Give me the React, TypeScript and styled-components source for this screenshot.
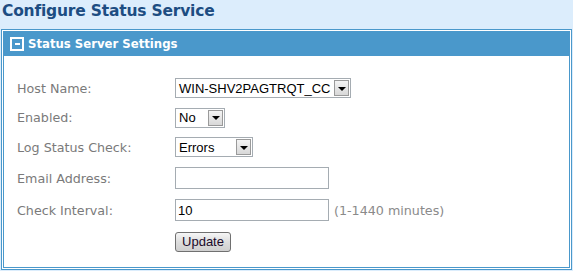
import styled, { createGlobalStyle } from "styled-components";
import { FC } from "react";

const Global = createGlobalStyle`
  html, body {
    margin: 0;
    padding: 0;
    background: #dcedfc;
  }
  body {
    font-family: "DejaVu Sans", Verdana, sans-serif;
  }
`;

const Page = styled.div`
  width: 573px;
  height: 271px;
  overflow: hidden;
  background: #dcedfc;
`;

const Title = styled.h1`
  margin: 0;
  padding: 2px 0 0 2px;
  height: 29px;
  box-sizing: border-box;
  font-family: "DejaVu Sans", Verdana, sans-serif;
  font-weight: bold;
  font-size: 15.5px;
  letter-spacing: -0.2px;
  color: #1d4d82;
`;

const Panel = styled.div`
  margin-left: 1px;
  width: 571px;
  box-sizing: border-box;
  border: 1px solid #4a98cb;
  padding: 1px;
  background: #fff;
`;

const Inner = styled.div`
  border: 1px solid #4a98cb;
  height: 237px;
  box-sizing: border-box;
`;

const Header = styled.div`
  height: 24px;
  background: #4a98cb;
  display: flex;
  align-items: center;
  padding-left: 6px;
  gap: 4px;
  color: #fff;
  font-family: "DejaVu Sans", Verdana, sans-serif;
  font-weight: bold;
  font-size: 11.7px;
`;

const Collapse = styled.span`
  width: 14px;
  height: 14px;
  box-sizing: border-box;
  border: 2px solid #fff;
  display: flex;
  align-items: center;
  justify-content: center;
  &::after {
    content: "";
    width: 5px;
    height: 2px;
    background: #fff;
  }
`;

const Form = styled.div`
  padding: 17px 0 0 13px;
`;

const Row = styled.div<{ $h: number }>`
  display: grid;
  grid-template-columns: 158px auto;
  align-items: center;
  height: ${(p) => p.$h}px;
`;

const Label = styled.span`
  font-family: "DejaVu Sans", Verdana, sans-serif;
  font-size: 12.7px;
  color: #7a7a7a;
`;

const Field = styled.div`
  display: flex;
  align-items: center;
  gap: 5px;
`;

const SelectBox = styled.div<{ $w: number }>`
  width: ${(p) => p.$w}px;
  height: 20px;
  box-sizing: border-box;
  border: 1px solid #a5acb2;
  display: flex;
  align-items: center;
  justify-content: space-between;
  padding: 1px;
  background: #fff;
  font-family: "Liberation Sans", Arial, sans-serif;
  font-size: 13px;
  color: #000;
`;

const SelectText = styled.span`
  padding-left: 2px;
`;

const Arrow = styled.span`
  width: 15px;
  height: 16px;
  box-sizing: border-box;
  border: 1px solid #9a9a9a;
  background: linear-gradient(#f4f4f4, #d8d8d8);
  display: flex;
  align-items: center;
  justify-content: center;
  &::after {
    content: "";
    border-left: 4px solid transparent;
    border-right: 4px solid transparent;
    border-top: 4px solid #000;
    margin-top: 1px;
  }
`;

const TextInput = styled.div`
  width: 154px;
  height: 22px;
  box-sizing: border-box;
  border: 1px solid #a5acb2;
  background: #fff;
  padding-left: 2px;
  display: flex;
  align-items: center;
  font-family: "Liberation Sans", Arial, sans-serif;
  font-size: 13px;
  color: #000;
`;

const Hint = styled.span`
  font-family: "DejaVu Sans", Verdana, sans-serif;
  font-size: 12.7px;
  color: #8a8a8a;
`;

const Button = styled.button`
  width: 56px;
  height: 20px;
  padding: 0;
  border: 1px solid #707070;
  border-radius: 3px;
  background: linear-gradient(#f6f6f6, #dddddd 50%, #cfcfcf);
  font-family: "Liberation Sans", Arial, sans-serif;
  font-size: 13px;
  color: #1a0a2a;
`;

const Select: FC<{ w: number; value: string }> = ({ w, value }) => (
  <SelectBox $w={w}>
    <SelectText>{value}</SelectText>
    <Arrow />
  </SelectBox>
);

const App: FC = () => (
  <Page>
    <Global />
    <Title>Configure Status Service</Title>
    <Panel>
      <Inner>
        <Header>
          <Collapse />
          Status Server Settings
        </Header>
        <Form>
          <Row $h={30}>
            <Label>Host Name:</Label>
            <Field>
              <Select w={176} value="WIN-SHV2PAGTRQT_CC" />
            </Field>
          </Row>
          <Row $h={29}>
            <Label>Enabled:</Label>
            <Field>
              <Select w={50} value="No" />
            </Field>
          </Row>
          <Row $h={30}>
            <Label>Log Status Check:</Label>
            <Field>
              <Select w={78} value="Errors" />
            </Field>
          </Row>
          <Row $h={32}>
            <Label>Email Address:</Label>
            <Field>
              <TextInput />
            </Field>
          </Row>
          <Row $h={32}>
            <Label>Check Interval:</Label>
            <Field>
              <TextInput>10</TextInput>
              <Hint>(1-1440 minutes)</Hint>
            </Field>
          </Row>
          <Row $h={31}>
            <span />
            <Field>
              <Button>Update</Button>
            </Field>
          </Row>
        </Form>
      </Inner>
    </Panel>
  </Page>
);

export default App;
